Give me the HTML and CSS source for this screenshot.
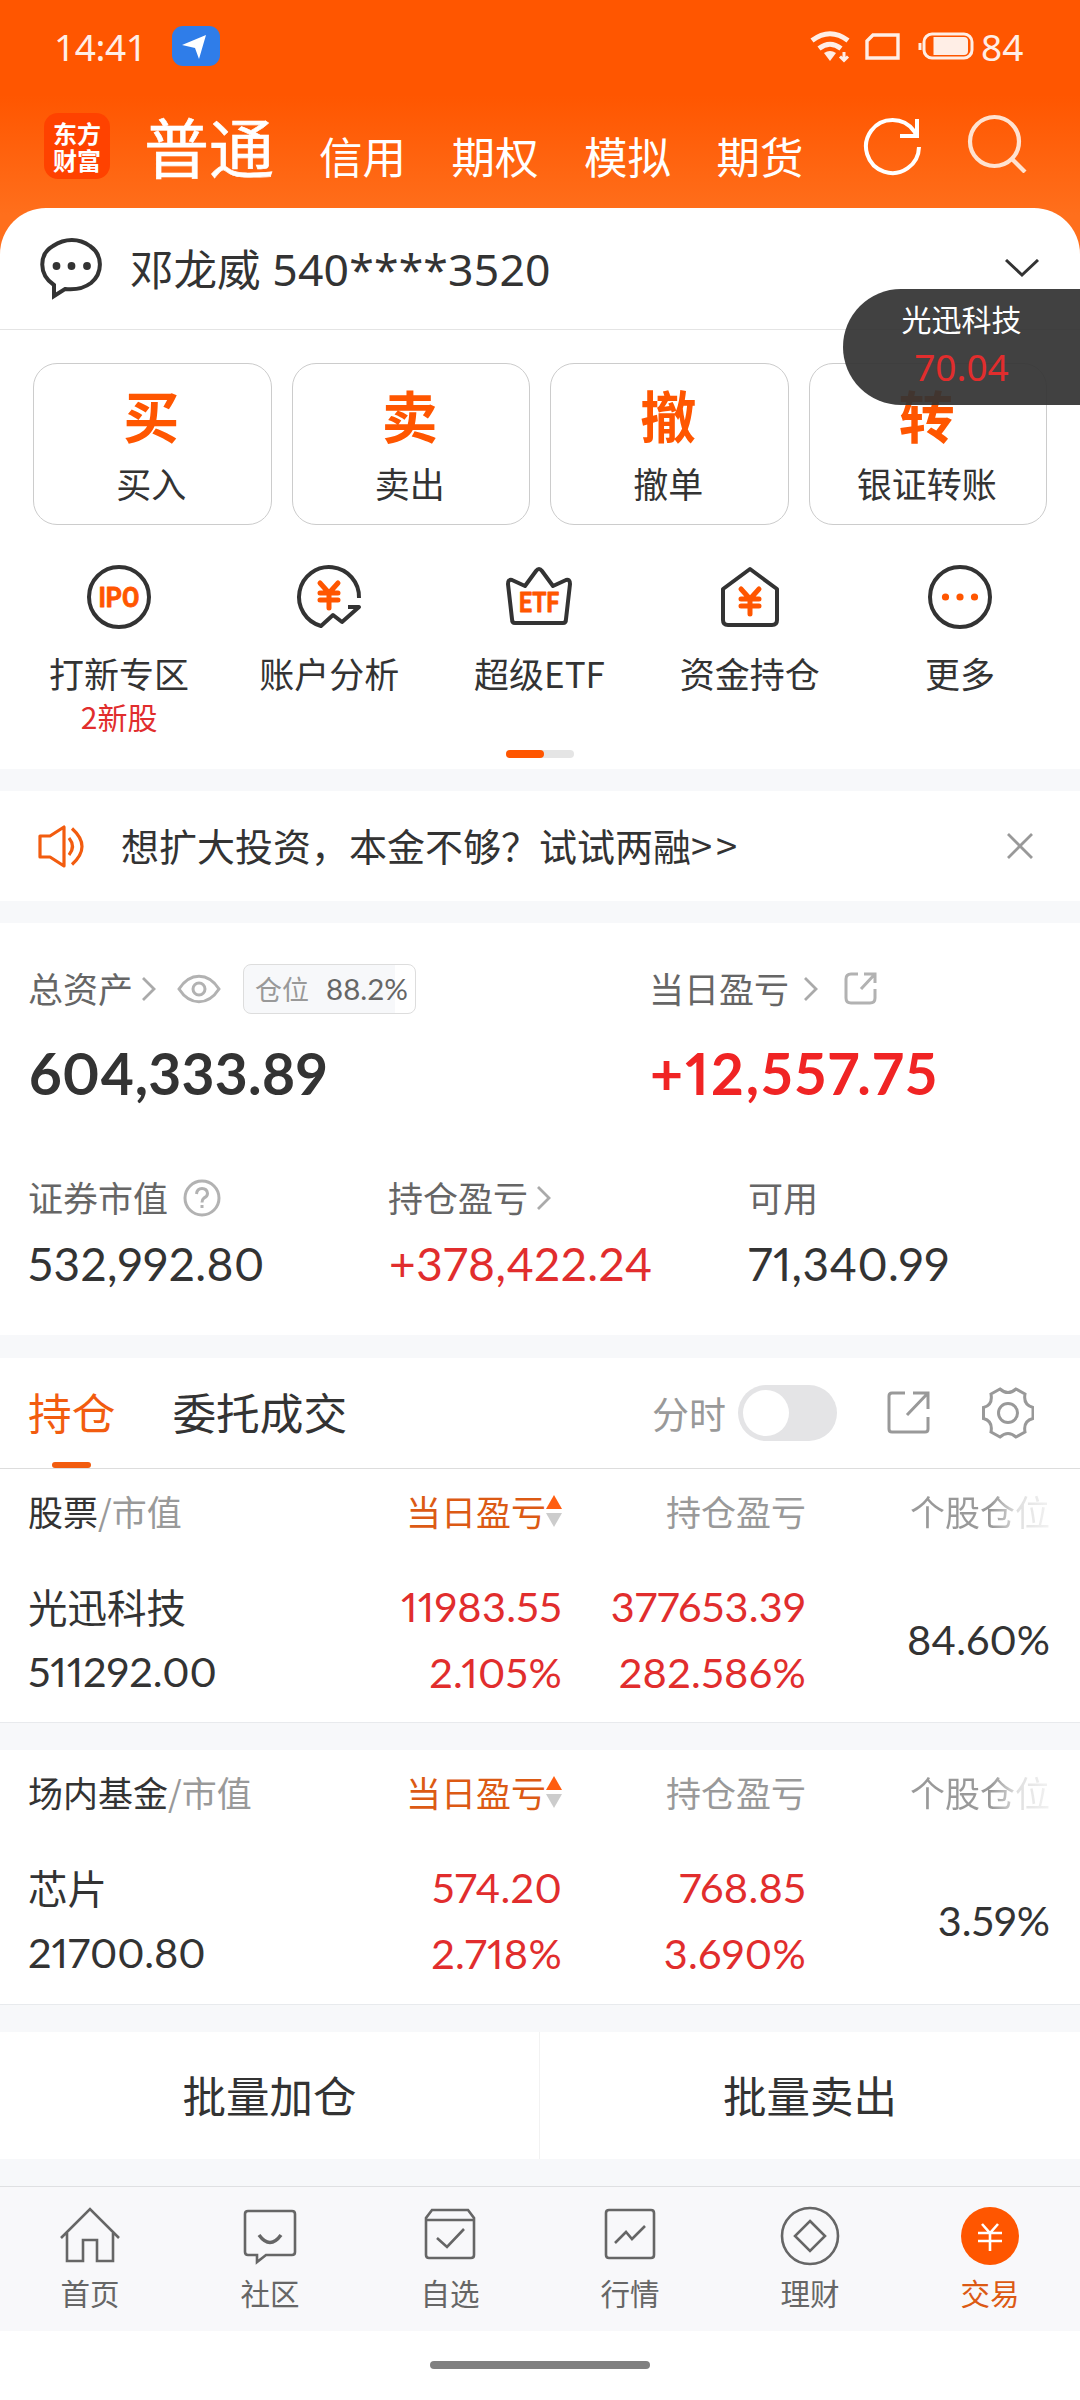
FILE: index.html
```html
<!DOCTYPE html>
<html lang="zh-CN">
<head>
<meta charset="utf-8">
<title>东方财富 - 交易</title>
<link rel="stylesheet" href="styles.css">
</head>
<body>
<div class="screen">
  <header class="top">
    <div class="status">
      <span class="clock">14:41</span>
      <svg class="nav-badge" width="48" height="40" viewBox="0 0 48 40"><rect width="48" height="40" rx="11" fill="#2f7de9"/><path d="M10 19 34 9 27 33 23 22Z" fill="#fff"/></svg>
      <svg class="status-icons" width="165" height="34" viewBox="0 0 165 34" fill="none" stroke="#ffeee6" stroke-width="3.4">
        <path d="M2 11.500Q20 -2 38 11.500" stroke-width="5"/><path d="M9 19.500Q20 11 31 19.500" stroke-width="5"/><path d="M14 24Q20 20 26 24L20 32Z" fill="#ffeee6" stroke="none"/><path d="M34 23V30M30 27.500 34 31.500 38 27.500" stroke-width="3"/>
        <path d="M63 6H88V29H57V12Z"/>
        <rect x="114" y="5" width="48" height="24" rx="8" stroke-width="3"/><path d="M110 14V21" stroke-width="3"/><path d="M123.500 8H154Q158 8 158 12V22Q158 26 154 26H123.500Z" fill="#ffeee6" stroke="none"/>
      </svg>
      <span class="battery">84</span>
    </div>
    <div class="modes">
      <div class="logo"><span>东方</span><span>财富</span></div>
      <span class="mode-active">普通</span>
      <div class="mode-list"><span>信用</span><span>期权</span><span>模拟</span><span>期货</span></div>
      <svg class="refresh" width="60" height="60" viewBox="0 0 60 60" fill="none" stroke="#fff" stroke-width="4"><path d="M57 31A26.500 26.500 0 1 1 52 15L55 20M55 3V20H38"/></svg>
      <svg width="60" height="60" viewBox="0 0 60 60" fill="none" stroke="#ffe2d0" stroke-width="4.200"><circle cx="27.500" cy="28.500" r="24.500"/><path d="M44.500 45.500 58 59"/></svg>
    </div>
  </header>

  <main>
    <section class="panel">
      <div class="account">
        <svg width="62" height="62" viewBox="0 0 62 62" fill="none" stroke="#333" stroke-width="4"><path d="M14 47C-2 36-1 16 13 8 25 0 39 0 50 8 63 17 63 35 51 45 43 51 34 52 25 51L14 58Z"/><g fill="#333" stroke="none"><circle cx="16.500" cy="28" r="3.900"/><circle cx="31.500" cy="28" r="3.900"/><circle cx="47" cy="28" r="3.900"/></g></svg>
        <span class="account-name">邓龙威 <span class="account-no">540****3520</span></span>
        <svg width="34" height="20" viewBox="0 0 34 20" fill="none" stroke="#333" stroke-width="3"><path d="M1 1 17 16 33 1"/></svg>
      </div>
      <div class="cards">
        <div class="card"><b>买</b><span>买入</span></div>
        <div class="card"><b>卖</b><span>卖出</span></div>
        <div class="card"><b>撤</b><span>撤单</span></div>
        <div class="card"><b>转</b><span>银证转账</span></div>
      </div>
      <div class="tools">
        <div class="tool">
          <svg class="tool-icon" viewBox="0 0 68 68"><circle cx="34" cy="34" r="30"/><text x="34" y="44" textLength="41" lengthAdjust="spacingAndGlyphs">IPO</text></svg>
          <span>打新专区</span><small>2新股</small>
        </div>
        <div class="tool">
          <svg class="tool-icon" viewBox="0 0 68 68"><path d="M64 35A30 30 0 1 0 26 63L38 52 47 59 64 44H53"/><path class="accent" d="M25 20 34 30 43 20M34 30V45M25 30H43M25 37H43"/></svg>
          <span>账户分析</span>
        </div>
        <div class="tool">
          <svg class="tool-icon" viewBox="0 0 68 68"><path d="M10 60Q7 60 7 56L3 21Q3 16 7 17L20 23 31 8Q34 4 37 8L48 23 61 17Q65 16 65 21L61 56Q61 60 58 60Z"/><text x="34" y="49" textLength="40" lengthAdjust="spacingAndGlyphs">ETF</text></svg>
          <span>超级ETF</span>
        </div>
        <div class="tool">
          <svg class="tool-icon" viewBox="0 0 68 68"><path d="M34 6 7 26V57Q7 62 12 62H56Q61 62 61 57V26Z"/><path class="accent" d="M25 26 34 36 43 26M34 36V51M25 36H43M25 43H43"/></svg>
          <span>资金持仓</span>
        </div>
        <div class="tool">
          <svg class="tool-icon" viewBox="0 0 68 68"><circle cx="34" cy="34" r="30"/><g class="dots"><circle cx="19.500" cy="34" r="3.600"/><circle cx="34" cy="34" r="3.600"/><circle cx="48.500" cy="34" r="3.600"/></g></svg>
          <span>更多</span>
        </div>
      </div>
      <div class="pager"><i></i></div>
    </section>

    <section class="notice">
      <svg width="48" height="44" viewBox="0 0 48 44" fill="none" stroke="#f25c0f" stroke-width="3.200" stroke-linejoin="round"><path d="M3 12H13L27 3V42L13 33H3Z"/><path d="M32 14Q39 22.500 32 31M35 4.500Q55 22.500 35 40.500"/></svg>
      <span class="notice-text">想扩大投资，本金不够？试试两融<span class="more">&gt;&gt;</span></span>
      <svg width="26" height="26" viewBox="0 0 26 26" stroke="#999" stroke-width="2.800"><path d="M1 1 25 25M25 1 1 25"/></svg>
    </section>

    <section class="assets">
      <div class="asset-main">
        <div>
          <div class="label-row">
            <span>总资产</span>
            <svg class="chev" viewBox="0 0 16 26"><path d="M2 2 13 13 2 24"/></svg>
            <svg class="eye" width="44" height="30" viewBox="0 0 44 30"><path d="M2 15C13-2 31-2 42 15 31 32 13 32 2 15Z"/><circle cx="22" cy="15" r="6"/></svg>
            <span class="ratio"><em>仓位</em><span>88.2%</span></span>
          </div>
          <div class="big">604,333.89</div>
        </div>
        <div>
          <div class="label-row">
            <span>当日盈亏</span>
            <svg class="chev chev-wide" viewBox="0 0 16 26"><path d="M2 2 13 13 2 24"/></svg>
            <svg class="share" width="34" height="34" viewBox="0 0 34 34"><path d="M14 2H7Q2 2 2 7V26Q2 31 7 31H26Q31 31 31 26V17M20 2H31V11M31 2 17 17"/></svg>
          </div>
          <div class="big up">+12,557.75</div>
        </div>
      </div>
      <div class="asset-sub">
        <div>
          <div class="label-row"><span>证券市值</span><svg class="help" width="38" height="38" viewBox="0 0 38 38"><circle cx="19" cy="19" r="17"/><path d="M13.500 15Q14 9.500 19 9.500T24.500 14.500Q24.500 17.500 21 19 19 20.500 19 23.500M19 26V29"/></svg></div>
          <div class="mid">532,992.80</div>
        </div>
        <div>
          <div class="label-row"><span>持仓盈亏</span><svg class="chev chev-close" viewBox="0 0 16 26"><path d="M2 2 13 13 2 24"/></svg></div>
          <div class="mid up">+378,422.24</div>
        </div>
        <div>
          <div class="label-row"><span>可用</span></div>
          <div class="mid">71,340.99</div>
        </div>
      </div>
    </section>

    <section class="holdings">
      <div class="tabs">
        <span class="tab tab-on">持仓</span>
        <span class="tab">委托成交</span>
        <span class="minute">分时</span>
        <span class="switch"><i></i></span>
        <svg class="export" width="44" height="44" viewBox="0 0 44 44"><path d="M18 2H5Q2 2 2 5V38Q2 41 5 41H38Q41 41 41 38V26M26 2H41V18M41 2 20 24"/></svg>
        <svg class="gear" width="52" height="52" viewBox="0 0 52 52"><path d="M9 7 18 2Q26 9 34 2L43 7Q41 18 51 20.500V31.500Q41 34 43 45L34 50Q26 43 18 50L9 45Q11 34 1.500 31.500V20.500Q11 18 9 7Z"/><circle cx="26" cy="26" r="9.500"/></svg>
      </div>
      <div class="table">
        <div class="thead"><span><b>股票</b>/市值</span><span class="sorted">当日盈亏<svg width="16" height="32" viewBox="0 0 16 32"><path d="M8 0 16 14H0Z" fill="#ff5d10"/><path d="M0 18H16L8 32Z" fill="#ccc"/></svg></span><span>持仓盈亏</span><span class="fade">个股仓位</span></div>
        <div class="row">
          <div><span class="name">光迅科技</span><span>511292.00</span></div>
          <div class="up"><span>11983.55</span><span>2.105%</span></div>
          <div class="up"><span>377653.39</span><span>282.586%</span></div>
          <div><span>84.60%</span></div>
        </div>
      </div>
    </section>

    <section class="table fund">
      <div class="thead"><span><b>场内基金</b>/市值</span><span class="sorted">当日盈亏<svg width="16" height="32" viewBox="0 0 16 32"><path d="M8 0 16 14H0Z" fill="#ff5d10"/><path d="M0 18H16L8 32Z" fill="#ccc"/></svg></span><span>持仓盈亏</span><span class="fade">个股仓位</span></div>
      <div class="row">
        <div><span class="name">芯片</span><span>21700.80</span></div>
        <div class="up"><span>574.20</span><span>2.718%</span></div>
        <div class="up"><span>768.85</span><span>3.690%</span></div>
        <div><span>3.59%</span></div>
      </div>
    </section>

    <section class="batch"><span>批量加仓</span><span>批量卖出</span></section>
  </main>

  <nav class="bottom">
    <div class="item"><svg viewBox="0 0 64 64"><path d="M3 34 32 5 61 34M9 29V57H25V36H39V57H55V29"/></svg><span>首页</span></div>
    <div class="item"><svg viewBox="0 0 64 64"><path d="M10 7H54Q57 7 57 10V48Q57 51 54 51H28L19 58V51H10Q7 51 7 48V10Q7 7 10 7Z"/><path d="M21 31Q32 46 43 31" stroke-width="3.500"/></svg><span>社区</span></div>
    <div class="item"><svg viewBox="0 0 64 64"><path d="M14 6H50L56 14V51Q56 54 53 54H11Q8 54 8 51V14ZM8 16H56M19 34 29 43 46 25"/></svg><span>自选</span></div>
    <div class="item"><svg viewBox="0 0 64 64"><path d="M11 6H53Q56 6 56 9V51Q56 54 53 54H11Q8 54 8 51V9Q8 6 11 6ZM17 39 28 28 34 35 47 22"/></svg><span>行情</span></div>
    <div class="item"><svg viewBox="0 0 64 64"><circle cx="32" cy="32" r="28"/><path d="M32 17 47 32 32 47 17 32Z"/></svg><span>理财</span></div>
    <div class="item item-on"><svg viewBox="0 0 64 64"><circle cx="32" cy="32" r="29"/><path d="M24 20 32 29 40 20M32 29V47M20 29H44M20 37H44"/></svg><span>交易</span></div>
  </nav>
  <div class="gesture"><i></i></div>

  <aside class="float"><span>光迅科技</span><span class="float-price">70.04</span></aside>
</div>
</body>
</html>
```
FILE: styles.css
```css
* { box-sizing: border-box; }
body {
  margin: 0;
  background: #fff;
  color: #333;
  font-family: "Noto Sans CJK SC", sans-serif;
}
svg { display: block; flex: none; }
i, em { font-style: normal; }
.screen { position: relative; width: 1080px; height: 2400px; overflow: hidden; display: flex; flex-direction: column; background: #f7f8fa; }

/* header */
.top { height: 270px; flex: none; background: linear-gradient(#ff5600 0, #ff5600 95px, #ff6f1c 215px, #ff6f1c 100%); color: #fff; }
.status { height: 92px; padding: 0 56px 0 54px; display: flex; align-items: center; font: 37px/1 "Noto Sans", sans-serif; color: #ffeee6; }
.clock { width: 118px; letter-spacing: -.4px; }
.status-icons { margin: 0 6px 0 auto; }
.battery { width: 43px; }
.modes { height: 116px; padding-left: 44px; display: flex; align-items: flex-start; padding-top: 21px; }
.logo { width: 66px; height: 66px; border-radius: 14px; background: #ff4200; display: flex; flex-direction: column; align-items: center; justify-content: center; font-size: 24px; line-height: 27px; font-weight: 700; margin-right: 34px; }
.mode-active { font-size: 65px; line-height: 70px; width: 175px; margin-top: -3px; font-weight: 400; -webkit-text-stroke: .6px #fff; }
.mode-list { display: flex; gap: 45.500px; font-size: 43.500px; line-height: 60px; margin-top: 13px; width: 543px; white-space: nowrap; }
.refresh { margin-right: 45px; margin-top: 3px; }

/* account panel */
main { flex: none; margin-top: -62px; }
.panel { height: 561px; background: #fff; border-radius: 46px 46px 0 0; display: flex; flex-direction: column; }
.account { height: 122px; padding: 0 41px 0 40px; display: flex; align-items: center; border-bottom: 1px solid #e4e4e4; flex: none; }
.account-name { flex: 1; padding-left: 28px; font-size: 43.5px; line-height: 60px; white-space: pre; }
.account-no { font-family: "Noto Sans", sans-serif; font-size: 44.500px; margin-left: 2px; letter-spacing: .2px; }
.cards { padding: 33px 33px 0; display: grid; grid-template-columns: repeat(4, 1fr); gap: 20px; flex: none; }
.card { height: 162px; border: 1.500px solid #ccc; border-radius: 24px; display: flex; flex-direction: column; align-items: center; }
.card b, .card span { margin-left: -2px; }
.card b { font-size: 56px; line-height: 60px; margin-top: 20px; color: #ff5600; font-weight: 700; }
.card span { font-size: 35px; line-height: 40px; margin-top: 19px; }
.tools { padding: 38px 15px 0 14px; display: grid; grid-template-columns: repeat(5, 1fr); }
.tool { display: flex; flex-direction: column; align-items: center; height: 182px; }
.tool span { font-size: 35px; line-height: 40px; margin-top: 22px; }
.tool small { font-size: 30px; line-height: 34px; margin-top: 6px; color: #e12d2d; }
.tool-icon { width: 68px; height: 68px; fill: none; stroke: #333; stroke-width: 4; stroke-linejoin: round; }
.tool-icon text { font: 700 28px Roboto, sans-serif; fill: #ff5600; stroke: #ff5600; stroke-width: .8; text-anchor: middle; }
.tool-icon .accent { stroke: #ff5600; stroke-width: 5; stroke-linecap: round; }
.tool-icon .dots { fill: #ff5600; stroke: none; }
.pager { width: 68px; height: 8px; border-radius: 4px; background: #e5e5e5; margin: 5px auto 0; }
.pager i { display: block; width: 38px; height: 8px; border-radius: 4px; background: #ff5600; }

/* notice */
.notice { height: 110px; margin-top: 22px; background: #fff; display: flex; align-items: center; padding: 0 47px 0 37px; }
.notice-text { flex: 1; padding-left: 36px; font-size: 38px; line-height: 50px; margin-top: -2px; }
.more { letter-spacing: 4px; }

/* assets */
.assets { height: 412px; margin-top: 22px; padding: 41px 28px 0; background: #fff; }
.label-row { display: flex; align-items: center; height: 50px; font-size: 35px; line-height: 50px; color: #666; }
.label-row > span:first-child { margin-top: -2px; }
.chev { width: 16px; height: 26px; fill: none; stroke: #aaa; stroke-width: 2.800; margin-left: 8px; }
.chev-wide { margin-left: 14px; }
.chev-close { margin-left: 8px; }
.eye, .share, .help { fill: none; stroke: #b2b2b2; stroke-width: 3; }
.eye { margin-left: 20px; }
.share { margin-left: 25px; }
.help { margin-left: 15px; }
.ratio { margin-left: 22px; width: 173px; height: 50px; border: 1.500px solid #ddd; border-radius: 8px; background: linear-gradient(90deg, #f7f8fa 88.200%, #fff 88.200%); display: flex; align-items: center; gap: 17px; padding-left: 11px; font-size: 27px; color: #999; }
.ratio span { font-family: Lato, sans-serif; font-size: 29.500px; color: #666; }
.asset-main { display: grid; grid-template-columns: 621px 1fr; }
.big { font: 700 57px/70px Lato, sans-serif; margin: 24px 0 0 1px; letter-spacing: .3px; font-variant-numeric: proportional-nums; }
.big.up { color: #f02424; letter-spacing: 2.200px; }
.asset-sub { display: grid; grid-template-columns: 360px 360px 1fr; margin-top: 63px; }
.asset-sub .label-row { height: 54px; }
.mid { font: 46px/60px Lato, sans-serif; margin-top: 9px; letter-spacing: .5px; font-variant-numeric: proportional-nums; }
.up { color: #e12d2d; }
.mid.up { padding-left: 1px; }

/* holdings */
.holdings { height: 365px; margin-top: 23px; background: #fff; border-bottom: 1px solid #e8eaed; }
.tabs { height: 111px; padding: 0 46px 0 28px; display: flex; align-items: center; border-bottom: 1px solid #ddd; }
.tab { font-size: 43.700px; line-height: 106px; height: 110px; margin-right: 57px; }
.tab-on { color: #f25c0f; display: flex; flex-direction: column; align-items: center; position: relative; }
.tab-on::after { content: ""; position: absolute; bottom: 0; width: 39px; height: 6px; border-radius: 3px; background: #f25c0f; }
.minute { margin-left: auto; font-size: 37px; color: #999; }
.switch { width: 99px; height: 56px; border-radius: 28px; background: #e4e4e6; margin: 0 50px 0 12px; padding: 5px; }
.switch i { display: block; width: 46px; height: 46px; border-radius: 50%; background: #fff; }
.export, .gear { fill: none; stroke: #999; stroke-width: 3; }
.export { margin-right: 51px; }
.thead, .row { display: grid; grid-template-columns: 320px 214px 244px 244px; padding-left: 28px; }
.thead { font-size: 35px; line-height: 50px; color: #999; padding-top: 17px; text-align: right; }
.thead > :first-child, .row > :first-child { text-align: left; align-items: flex-start; }
.thead b { font-weight: 400; color: #333; }
.sorted { display: flex; align-items: center; justify-content: flex-end; color: #dc5a14; }
.fade { background: linear-gradient(90deg, #999 0, #999 76%, #e0e0e0 87%, #f2f2f2 100%); background-clip: text; -webkit-background-clip: text; color: transparent; }
.row { height: 134px; margin-top: 36px; font: 41.500px/66px Lato, sans-serif; font-variant-numeric: proportional-nums; }
.row > .up { letter-spacing: .3px; }
.row > div { display: flex; flex-direction: column; justify-content: center; align-items: flex-end; }
.name { font: 39.500px/64px "Noto Sans CJK SC", sans-serif; }
.fund { height: 255px; margin-top: 27px; background: #fff; border-bottom: 1px solid #e8eaed; }
.batch { height: 127px; margin-top: 27px; background: #fff; display: grid; grid-template-columns: 539px 541px; text-align: center; font-size: 43.500px; line-height: 125px; }
.batch span + span { border-left: 1px solid #f2f2f2; }

/* bottom navigation */
.bottom { margin-top: 27px; height: 145px; flex: none; border-top: 1px solid #dfe0e2; background: #f8f8fa; display: grid; grid-template-columns: repeat(6, 1fr); }
.item { display: flex; flex-direction: column; align-items: center; padding-top: 17px; font-size: 29.500px; line-height: 40px; color: #666; }
.item svg { width: 64px; height: 64px; fill: none; stroke: #666; stroke-width: 2.600; }
.item span { margin-top: 4px; }
.item-on { color: #dc5a14; }
.item-on circle { fill: #ff5600; stroke: none; }
.item-on path { stroke: #fff; }
.gesture { flex: 1; background: #fff; padding-top: 30px; }
.gesture i { display: block; width: 220px; height: 8px; border-radius: 4px; margin: 0 auto; background: #808080; }

/* floating quote */
.float { position: absolute; right: 0; top: 289px; width: 237px; height: 116px; border-radius: 58px 0 0 58px; background: rgba(51, 51, 51, .93); color: #fff; display: flex; flex-direction: column; align-items: center; font-size: 30px; line-height: 40px; padding-top: 9px; }
.float-price { font: 37px/50px "Noto Sans", sans-serif; margin-top: 4px; color: #e12d2d; }
```
